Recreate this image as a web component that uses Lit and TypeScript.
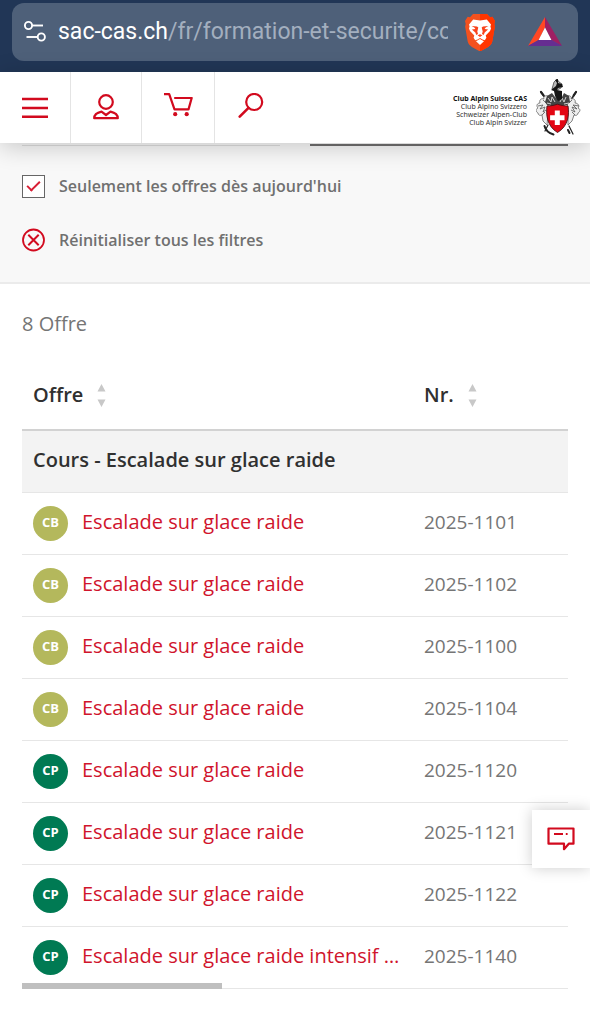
import { LitElement, html, css, svg } from "lit";
import { customElement, property } from "lit/decorators.js";
import { classMap } from "lit/directives/class-map.js";

interface Course {
  type: "CB" | "CP";
  title: string;
  number: string;
}

const COURSES: Course[] = [
  { type: "CB", title: "Escalade sur glace raide", number: "2025-1101" },
  { type: "CB", title: "Escalade sur glace raide", number: "2025-1102" },
  { type: "CB", title: "Escalade sur glace raide", number: "2025-1100" },
  { type: "CB", title: "Escalade sur glace raide", number: "2025-1104" },
  { type: "CP", title: "Escalade sur glace raide", number: "2025-1120" },
  { type: "CP", title: "Escalade sur glace raide", number: "2025-1121" },
  { type: "CP", title: "Escalade sur glace raide", number: "2025-1122" },
  { type: "CP", title: "Escalade sur glace raide intensif …", number: "2025-1140" },
];

const reset = css`
  * {
    box-sizing: border-box;
  }
  button {
    appearance: none;
    border: 0;
    margin: 0;
    padding: 0;
    background: none;
    font: inherit;
    color: inherit;
    cursor: pointer;
  }
  svg {
    display: block;
    flex: none;
  }
`;

@customElement("browser-bar")
export class BrowserBar extends LitElement {
  static styles = [
    reset,
    css`
      :host {
        display: block;
        padding: 3px 12px 11px;
        background: #213656;
      }
      .pill {
        display: flex;
        align-items: center;
        height: 58px;
        padding: 0 16px 0 11px;
        border-radius: 12px;
        background: #4e6079;
      }
      .address {
        flex: 1;
        min-width: 0;
        display: flex;
        align-items: center;
        gap: 11px;
      }
      .url {
        flex: 1;
        min-width: 0;
        overflow: hidden;
        white-space: nowrap;
        text-align: left;
        font: 23px/32px Roboto, sans-serif;
        color: #a3afbf;
      }
      .host {
        color: #fff;
      }
      .shield {
        margin: 0 33px 0 17px;
      }
    `,
  ];

  render() {
    return html`
      <div class="pill">
        <button class="address" aria-label="Adresse du site">
          <svg width="24" height="24" viewBox="0 0 24 24" fill="none" stroke="#fff" stroke-width="1.9">
            <circle cx="5.5" cy="5.5" r="3.6" />
            <path d="M9.1 5.5H20" />
            <circle cx="18.3" cy="17" r="3.6" />
            <path d="M3.5 17H14.7" />
          </svg>
          <span class="url"><span class="host">sac-cas.ch</span>/fr/formation-et-securite/co</span>
        </button>
        <button class="shield" aria-label="Brave Shields">
          <svg width="30" height="38" viewBox="0 0 30 38">
            <path fill="#f4511e" d="M8 1h14l3 3.200 2.300-.4L30 8l-.7 3 .6 2.400-2.600 15.200c-.6 2.600-2.200 4-4.200 5.400L15 38.500 6.900 34c-2-1.400-3.600-2.800-4.200-5.400L.1 13.400.7 11 0 8l2.700-4.200L5 4.200z" />
            <path fill="#ff3500" d="M15 1h7l3 3.200 2.300-.4L30 8l-.7 3 .6 2.400-2.600 15.200c-.6 2.600-2.200 4-4.200 5.400L15 38.500z" />
            <path fill="#fff" d="M15 7.500l3.400-.5 3.400-.4 4.200 4.800-.6 2 .6 2-1 2.700-4.300 4.500.7 2.200-1.600 2.400-2.300-.7-2.500-1.500-2.500 1.500-2.300.7-1.600-2.400.7-2.200L5 18.100l-1-2.700.6-2-.6-2 4.200-4.800 3.400.4z" />
            <path fill="#fff" d="M11 28.300l4-2.200 4 2.200-4 3.600z" />
            <path fill="#f9431c" d="M6.600 13.100l5.400.4 1.300 1-1 3.900.7 2.700-1.700 1-1-2.700-3.400-2.900 3.500-.5-1.100-1.600zM23.400 13.100l-5.400.4-1.300 1 1 3.900-.7 2.700 1.700 1 1-2.700 3.400-2.900-3.500-.5 1.100-1.600zM12.600 22.300l2.400-1 2.400 1-2.400 1.700z" />
          </svg>
        </button>
        <button aria-label="Brave Rewards">
          <svg width="34" height="30" viewBox="0 0 34 30">
            <path fill="#ff4724" d="M17 0v10.500L11 22.800 0 29z" />
            <path fill="#9e1f63" d="M17 0l17 29-11-6.200-6-12.300z" />
            <path fill="#662d91" d="M0 29l11-6.200h12L34 29z" />
            <path fill="#fff" d="M17 10.500l6.400 12.500H10.600z" />
          </svg>
        </button>
      </div>
    `;
  }
}

@customElement("site-header")
export class SiteHeader extends LitElement {
  static styles = [
    reset,
    css`
      :host {
        display: flex;
        justify-content: space-between;
        position: relative;
        z-index: 1;
        height: 71px;
        background: #fff;
        color: #d20a1e;
        box-shadow: 0 4px 24px rgba(0, 0, 0, 0.2);
      }
      .tools {
        display: flex;
      }
      .tool {
        display: grid;
        place-items: center;
        width: 71px;
        border-right: 1px solid #e4e4e4;
      }
      .wide {
        width: 73px;
      }
      .tool:last-child {
        border-right: 0;
      }
      .brand {
        display: flex;
        align-items: center;
        gap: 9px;
        padding-right: 8px;
        color: #333;
        text-align: right;
        text-decoration: none;
        font: 7px/8px "Noto Sans", sans-serif;
      }
      .names {
        padding-top: 6px;
      }
      .brand span {
        display: block;
      }
      .brand .main {
        color: #111;
        font-weight: 700;
      }
    `,
  ];

  private crest = svg`
    <g fill="none" stroke="#222" stroke-linecap="round">
      <path stroke-width="1.600" d="M5 13l8 11M40 13l-7 11" />
      <path stroke-width="2.200" d="M5 13l2.500 3.400M40 13l-2.300 3.400" />
      <path stroke-width="1.200" d="M12 46L9 52M33 47l4 8" />
      <path stroke-width="2" d="M8.500 47c1 4 4 7 9 8.500M32 51l1.500 3" />
    </g>
    <g fill="#eee" stroke="#666" stroke-width=".8">
      <path d="M12 17c-3-1-5 1-4 3-3-1-5 1-4 4-3 0-4 3-2 5-3 1-2 4 0 5 0 2 2 3 4 2l1 6 4 4 1-12z" />
      <path d="M31 17c3-1 5 1 4 3 3-1 5 1 4 4 3 0 5 3 3 5 3 1 2 4 0 5 0 2-2 3-4 2l-2 6-4 4 0-12z" />
    </g>
    <path fill="none" stroke="#555" stroke-width=".8" d="M2 27l5-1-3 4 5-2-2 5 3-2M7 21l3 3M43 27l-6-1 4 4-5-2 3 5-4-2M36 21l-3 3M6 36l3-3M39 36l-3-3" />
    <path fill="#444" d="M11 17l5-3 3 4 3 2 4-2 2-4 5 3 1 6-3 3-10 2-10-2-2-3z" />
    <path fill="none" stroke="#ddd" stroke-width=".9" d="M12 19l3 4 1-5 3 5M30 18l-2 5-2-4-2 4M11 24l4 1M33 24l-5 1" />
    <path fill="#bbb" stroke="#333" stroke-width=".7" d="M18 3l3-3 2 3 3 2-1 4-6 3-3-2z" />
    <path fill="#151515" d="M19 1l3-1v4l4 1 1 3-5 1-1 2 5 1v8l-4 2-3-5-1-5-3-1 5-4 1-3z" />
    <path fill="#e30613" stroke="#4a1014" stroke-width=".9" d="M11 27c3 0 7-.5 10.300-1.800C25 26.500 29 27 32 27c1.200 8 .8 20-10.500 26.500C10.500 47 10 35 11 27z" />
    <path fill="#fff" d="M18.800 31.500h5v4.700h4.700v5h-4.700V46h-5v-4.800h-4.700v-5h4.700z" />
  `;

  render() {
    return html`
      <nav class="tools" aria-label="Outils">
        <button class="tool" aria-label="Menu">
          <svg width="26" height="22" viewBox="0 0 26 22" fill="none" stroke="currentColor" stroke-width="2.600">
            <path d="M0 2h26M0 11h26M0 19.700h26" />
          </svg>
        </button>
        <button class="tool" aria-label="Compte">
          <svg width="26" height="28" viewBox="0 1 26 28" fill="none" stroke="currentColor" stroke-width="2.200" stroke-linejoin="round">
            <circle cx="13" cy="9" r="6.800" />
            <path d="M8.500 18.600C4.500 19.500 1.200 21 1.200 25.200h23.600c0-4.200-3.300-5.700-7.300-6.600L13 22z" />
          </svg>
        </button>
        <button class="tool wide" aria-label="Panier">
          <svg width="30" height="30" viewBox="0 3 30 30" fill="none" stroke="currentColor" stroke-width="2.200" stroke-linejoin="round">
            <path d="M1 4.200h5.200l5.300 15.200h14L28.700 8H11.200" />
            <circle cx="12.200" cy="24.200" r="2.100" fill="currentColor" stroke="none" />
            <circle cx="23.700" cy="24.200" r="2.100" fill="currentColor" stroke="none" />
          </svg>
        </button>
        <button class="tool" aria-label="Recherche">
          <svg width="26" height="30" viewBox="1 2 26 30" fill="none" stroke="currentColor" stroke-width="2.200" stroke-linecap="round">
            <circle cx="17.200" cy="11" r="8" />
            <path stroke-width="2.600" d="M11.500 16.800L2.700 25.600" />
          </svg>
        </button>
      </nav>
      <a class="brand" href="#">
        <span class="names">
          <span class="main">Club Alpin Suisse CAS</span>
          <span>Club Alpino Svizzero</span>
          <span>Schweizer Alpen-Club</span>
          <span>Club Alpin Svizzer</span>
        </span>
        <svg width="46" height="57" viewBox="0 0 46 57" aria-hidden="true">${this.crest}</svg>
      </a>
    `;
  }
}

@customElement("offer-filters")
export class OfferFilters extends LitElement {
  static styles = [
    reset,
    css`
      :host {
        display: block;
        padding: 0 22px 30px;
        background: #f8f8f8;
        border-bottom: 2px solid #ebebeb;
        color: #707070;
        font: 600 16px/24px "Open Sans", sans-serif;
      }
      .fields {
        display: grid;
        grid-template-columns: 1fr 1fr;
        gap: 30px;
        height: 3px;
        margin-bottom: 28px;
      }
      .field {
        border-bottom: 1px solid #ddd;
      }
      .active {
        border-bottom: 2px solid #706f6f;
      }
      .row {
        display: flex;
        align-items: center;
        gap: 14px;
        height: 24px;
      }
      .row + .row {
        margin-top: 30px;
      }
      .check {
        appearance: none;
        display: grid;
        place-items: center;
        width: 23px;
        height: 23px;
        margin: 0;
        border: 1px solid #666;
        background: #fff;
      }
      .check:checked::before {
        content: "";
        width: 11px;
        height: 5px;
        margin-bottom: 3px;
        border: solid #d81e34;
        border-width: 0 0 2px 2px;
        transform: rotate(-45deg);
      }
    `,
  ];

  render() {
    return html`
      <div class="fields">
        <div class="field"></div>
        <div class="field active"></div>
      </div>
      <div class="row">
        <input class="check" id="upcoming" type="checkbox" checked />
        <label for="upcoming">Seulement les offres dès aujourd'hui</label>
      </div>
      <button class="row">
        <svg width="23" height="24" viewBox="0 0 23 24" fill="none" stroke="#d20a1e" stroke-width="1.800">
          <circle cx="11.500" cy="12" r="10.500" />
          <path stroke-width="2" d="M6.300 6.800l10.400 10.400M16.700 6.800L6.300 17.200" />
        </svg>
        Réinitialiser tous les filtres
      </button>
    `;
  }
}

@customElement("offer-table")
export class OfferTable extends LitElement {
  @property({ attribute: false }) courses: Course[] = [];

  static styles = [
    reset,
    css`
      :host {
        display: block;
        position: relative;
        color: #757575;
        font: 20px/28px "Open Sans", sans-serif;
      }
      table {
        width: 100%;
        table-layout: fixed;
        border-collapse: separate;
        border-spacing: 0;
      }
      th,
      td {
        height: 62px;
        padding: 0 8px 0 11px;
        border-bottom: 1px solid #e6e6e6;
        text-align: left;
        white-space: nowrap;
      }
      thead th {
        height: 70px;
        border-bottom: 2px solid #d2d2d2;
      }
      th {
        color: #303030;
        font-weight: 600;
      }
      tbody th {
        padding-bottom: 4px;
        background: #f3f3f3;
      }
      td.number {
        padding-bottom: 4px;
        font-size: 19px;
      }
      .number {
        width: 155px;
      }
      .sort {
        display: flex;
        align-items: center;
        gap: 14px;
      }
      .offer {
        display: flex;
        align-items: center;
        gap: 14px;
      }
      .badge {
        flex: none;
        width: 35px;
        padding-bottom: 2px;
        border-radius: 50%;
        background: #b4b85c;
        color: #fff;
        text-align: center;
        font-size: 13px;
        font-weight: 700;
        line-height: 33px;
      }
      .green {
        background: #007a53;
      }
      .title {
        overflow: hidden;
        padding-bottom: 4px;
        text-overflow: ellipsis;
        color: #d0142c;
        text-decoration: none;
      }
      .thumb {
        position: absolute;
        left: 0;
        bottom: 0;
        width: 200px;
        height: 6px;
        background: #bfbfbf;
      }
    `,
  ];

  private heading(label: string) {
    return html`
      <button class="sort">
        ${label}
        <svg width="9" height="23" viewBox="0 0 9 23" fill="#c8c8c8" aria-hidden="true">
          <path d="M4.500 0L8.500 7.500h-8zM4.500 23L.5 15.500h8z" />
        </svg>
      </button>
    `;
  }

  render() {
    return html`
      <table>
        <thead>
          <tr>
            <th scope="col">${this.heading("Offre")}</th>
            <th scope="col" class="number">${this.heading("Nr.")}</th>
          </tr>
        </thead>
        <tbody>
          <tr>
            <th colspan="2" scope="colgroup">Cours - Escalade sur glace raide</th>
          </tr>
          ${this.courses.map(
            (course) => html`
              <tr>
                <td>
                  <div class="offer">
                    <span class=${classMap({ badge: true, green: course.type === "CP" })}>${course.type}</span>
                    <a class="title" href="#">${course.title}</a>
                  </div>
                </td>
                <td class="number">${course.number}</td>
              </tr>
            `
          )}
        </tbody>
      </table>
      <div class="thumb"></div>
    `;
  }
}

@customElement("app-root")
export class AppRoot extends LitElement {
  static styles = [
    reset,
    css`
      :host {
        display: block;
        min-height: 100vh;
        background: #fff;
        font-family: "Open Sans", sans-serif;
      }
      main {
        padding: 26px 22px 34px;
      }
      .count {
        margin: 0 0 23px;
        color: #757575;
        font-size: 20px;
        line-height: 28px;
      }
      .feedback {
        position: fixed;
        right: 0;
        bottom: 155px;
        z-index: 2;
        display: grid;
        place-items: center;
        width: 58px;
        height: 58px;
        background: #fff;
        box-shadow: 0 0 14px rgba(0, 0, 0, 0.2);
      }
    `,
  ];

  render() {
    return html`
      <browser-bar></browser-bar>
      <site-header></site-header>
      <offer-filters></offer-filters>
      <main>
        <p class="count">8 Offre</p>
        <offer-table .courses=${COURSES}></offer-table>
      </main>
      <button class="feedback" aria-label="Feedback">
        <svg width="28" height="24" viewBox="0 0 28 24" fill="none" stroke="#d20a1e" stroke-width="2.200" stroke-linejoin="round">
          <path d="M1.500 1.500h25v15.200h-4.700L17 22.200v-5.500H1.500z" />
          <path stroke-width="1.800" d="M7 7h9M18.800 7h1.800" />
        </svg>
      </button>
    `;
  }
}
